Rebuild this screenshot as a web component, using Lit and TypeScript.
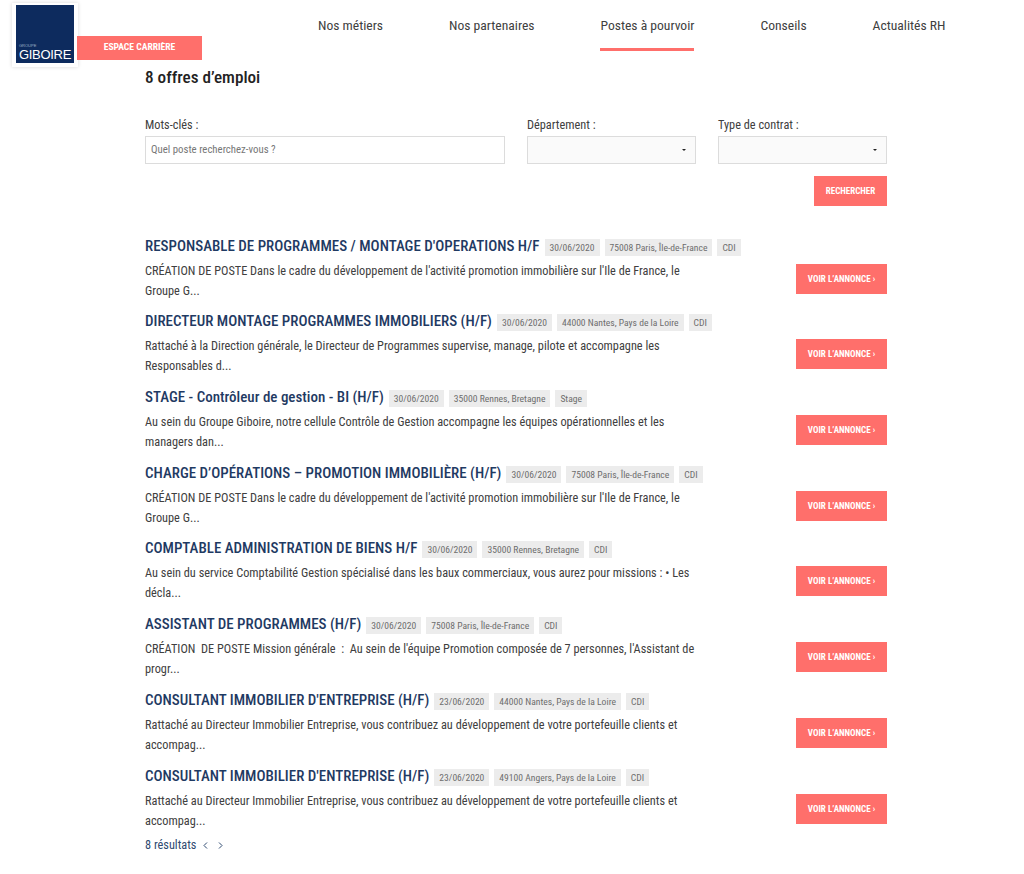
import { LitElement, css, html } from 'lit';
import { customElement } from 'lit/decorators.js';

const NAV = [
  { label: 'Nos métiers' },
  { label: 'Nos partenaires' },
  { label: 'Postes à pourvoir', active: true },
  { label: 'Conseils' },
  { label: 'Actualités RH' },
];

const RE1 = "CRÉATION DE POSTE Dans le cadre du développement de l'activité promotion immobilière sur l'Ile de France, le Groupe G...";
const RI = "Rattaché au Directeur Immobilier Entreprise, vous contribuez au développement de votre portefeuille clients et accompag...";

const JOBS = [
  { title: "RESPONSABLE DE PROGRAMMES / MONTAGE D'OPERATIONS H/F", date: '30/06/2020', place: '75008 Paris, Île-de-France', type: 'CDI', text: RE1 },
  { title: 'DIRECTEUR MONTAGE PROGRAMMES IMMOBILIERS (H/F)', date: '30/06/2020', place: '44000 Nantes, Pays de la Loire', type: 'CDI', text: 'Rattaché à la Direction générale, le Directeur de Programmes supervise, manage, pilote et accompagne les Responsables d...' },
  { title: 'STAGE - Contrôleur de gestion - BI (H/F)', date: '30/06/2020', place: '35000 Rennes, Bretagne', type: 'Stage', text: 'Au sein du Groupe Giboire, notre cellule Contrôle de Gestion accompagne les équipes opérationnelles et les managers dan...' },
  { title: 'CHARGE D’OPÉRATIONS – PROMOTION IMMOBILIÈRE (H/F)', date: '30/06/2020', place: '75008 Paris, Île-de-France', type: 'CDI', text: RE1 },
  { title: 'COMPTABLE ADMINISTRATION DE BIENS H/F', date: '30/06/2020', place: '35000 Rennes, Bretagne', type: 'CDI', text: 'Au sein du service Comptabilité Gestion spécialisé dans les baux commerciaux, vous aurez pour missions : • Les décla...' },
  { title: 'ASSISTANT DE PROGRAMMES (H/F)', date: '30/06/2020', place: '75008 Paris, Île-de-France', type: 'CDI', text: "CRÉATION  DE POSTE Mission générale  :  Au sein de l'équipe Promotion composée de 7 personnes, l'Assistant de progr..." },
  { title: "CONSULTANT IMMOBILIER D'ENTREPRISE (H/F)", date: '23/06/2020', place: '44000 Nantes, Pays de la Loire', type: 'CDI', text: RI },
  { title: "CONSULTANT IMMOBILIER D'ENTREPRISE (H/F)", date: '23/06/2020', place: '49100 Angers, Pays de la Loire', type: 'CDI', text: RI },
];

@customElement('app-root')
export class AppRoot extends LitElement {
  static styles = css`
    :host {
      display: block;
      width: 1024px;
      height: 874px;
      overflow: hidden;
      background: #fff;
      font-family: 'Roboto', 'Noto Sans', sans-serif;
      font-stretch: condensed;
      color: #404040;
    }

    .head {
      display: flex;
      height: 66px;
      align-items: flex-start;
    }

    .brand {
      display: flex;
      align-items: flex-start;
      width: 318px;
      padding: 3px 0 0 12px;
      box-sizing: border-box;
    }

    .logo {
      width: 58px;
      height: 58px;
      padding: 2px 4px 4px;
      background: #fff;
      box-shadow: 0 0 4px rgba(0, 0, 0, 0.15);
      flex: none;
    }

    .square {
      width: 58px;
      height: 58px;
      background: #0d2b5e;
      color: #fff;
      display: flex;
      flex-direction: column;
      justify-content: flex-end;
      padding: 0 0 2px 3px;
      box-sizing: border-box;
      font-family: 'Liberation Sans', sans-serif;
      font-stretch: normal;
    }

    .square small {
      font-size: 4px;
      line-height: 5px;
      color: #9fb0c8;
    }

    .square b {
      font-weight: 400;
      font-size: 13px;
      line-height: 13px;
      letter-spacing: -0.3px;
    }

    .tag {
      width: 125px;
      height: 24px;
      margin: 33px 0 0 -1px;
      background: #ff6f6b;
      color: #fff;
      font-size: 9.6px;
      font-weight: 700;
      line-height: 22px;
      text-align: center;
      flex: none;
      position: relative;
    }

    nav {
      display: flex;
      gap: 66px;
      font-size: 13.6px;
      line-height: 18px;
      padding-top: 16px;
    }

    nav a {
      display: block;
      height: 32px;
      box-sizing: border-box;
    }

    nav a.on {
      border-bottom: 3px solid #ff6f6b;
      height: 35px;
    }

    main {
      width: 742px;
      margin-left: 145px;
    }

    h1 {
      margin: 0;
      font-size: 17.2px;
      font-weight: 500;
      line-height: 22px;
      color: #222;
    }

    .filters {
      display: grid;
      grid-template-columns: 360px 169px 169px;
      column-gap: 22px;
      margin-top: 29px;
    }

    label {
      display: block;
      font-size: 12.3px;
      line-height: 17px;
      margin-bottom: 2px;
    }

    .field {
      height: 28px;
      box-sizing: border-box;
      border: 1px solid #dcdcdc;
      font-size: 10.8px;
      line-height: 26px;
      padding: 0 5px;
      color: #777;
    }

    .select {
      background: #fafafa;
      display: flex;
      justify-content: flex-end;
      align-items: center;
      padding-right: 9px;
    }

    .select i {
      border: 2px solid transparent;
      border-top: 2px solid #222;
      border-bottom: 0;
    }

    .go {
      display: flex;
      justify-content: flex-end;
      margin: 12px 0 24.7px;
    }

    .btn {
      background: #ff6f6b;
      color: #fff;
      font-size: 9px;
      font-weight: 700;
      height: 30px;
      line-height: 30px;
      text-align: center;
    }

    .go .btn { width: 73px; }

    .row {
      display: grid;
      grid-template-columns: 1fr 91px;
      align-content: start;
      height: 75.7px;
    }

    .top {
      grid-column: 1 / -1;
      display: flex;
      align-items: center;
      gap: 5px;
      height: 30px;
    }

    .row .body {
      grid-column: 1;
      grid-row: 2;
      max-width: 550px;
      font-size: 12.3px;
      line-height: 20px;
      white-space: pre-wrap;
    }

    .row .btn {
      grid-column: 2;
      grid-row: 2;
      margin-top: 3px;
    }

    h2 {
      margin: 0;
      font-size: 15px;
      font-weight: 500;
      color: #1f3a63;
      white-space: nowrap;
    }

    .chip {
      margin-top: 3px;
      background: #ececec;
      color: #6e6e6e;
      font-size: 9.6px;
      line-height: 17px;
      padding: 0 5px;
    }

    .pager {
      display: flex;
      align-items: center;
      font-size: 12.3px;
      line-height: 18px;
      color: #2f4a70;
    }

    .pager svg {
      width: 5px;
      height: 7px;
      fill: none;
      stroke: #2f4a70;
      stroke-width: 1;
      margin-left: 10px;
    }

    .pager svg:first-of-type { margin-left: 7px; }
  `;

  render() {
    return html`
      <div class="head">
        <div class="brand">
          <div class="logo">
            <div class="square"><small>GROUPE</small><b>GIBOIRE</b></div>
          </div>
          <div class="tag">ESPACE CARRIÈRE</div>
        </div>
        <nav>
          ${NAV.map((n) => html`<a class=${n.active ? 'on' : ''}>${n.label}</a>`)}
        </nav>
      </div>
      <main>
        <h1>8 offres d’emploi</h1>
        <div class="filters">
          <div><label>Mots-clés :</label><div class="field">Quel poste recherchez-vous ?</div></div>
          <div><label>Département :</label><div class="field select"><i></i></div></div>
          <div><label>Type de contrat :</label><div class="field select"><i></i></div></div>
        </div>
        <div class="go"><div class="btn">RECHERCHER</div></div>
        ${JOBS.map((j) => html`
          <div class="row">
            <div class="top">
              <h2>${j.title}</h2>
              <span class="chip">${j.date}</span>
              <span class="chip">${j.place}</span>
              <span class="chip">${j.type}</span>
            </div>
            <div class="body">${j.text}</div>
            <div class="btn">VOIR L’ANNONCE ›</div>
          </div>
        `)}
        <div class="pager">
          <span>8 résultats</span>
          <svg viewBox="0 0 5 7"><path d="M4 0.5 1 3.5l3 3"></path></svg>
          <svg viewBox="0 0 5 7"><path d="M1 0.5l3 3-3 3"></path></svg>
        </div>
      </main>
    `;
  }
}
